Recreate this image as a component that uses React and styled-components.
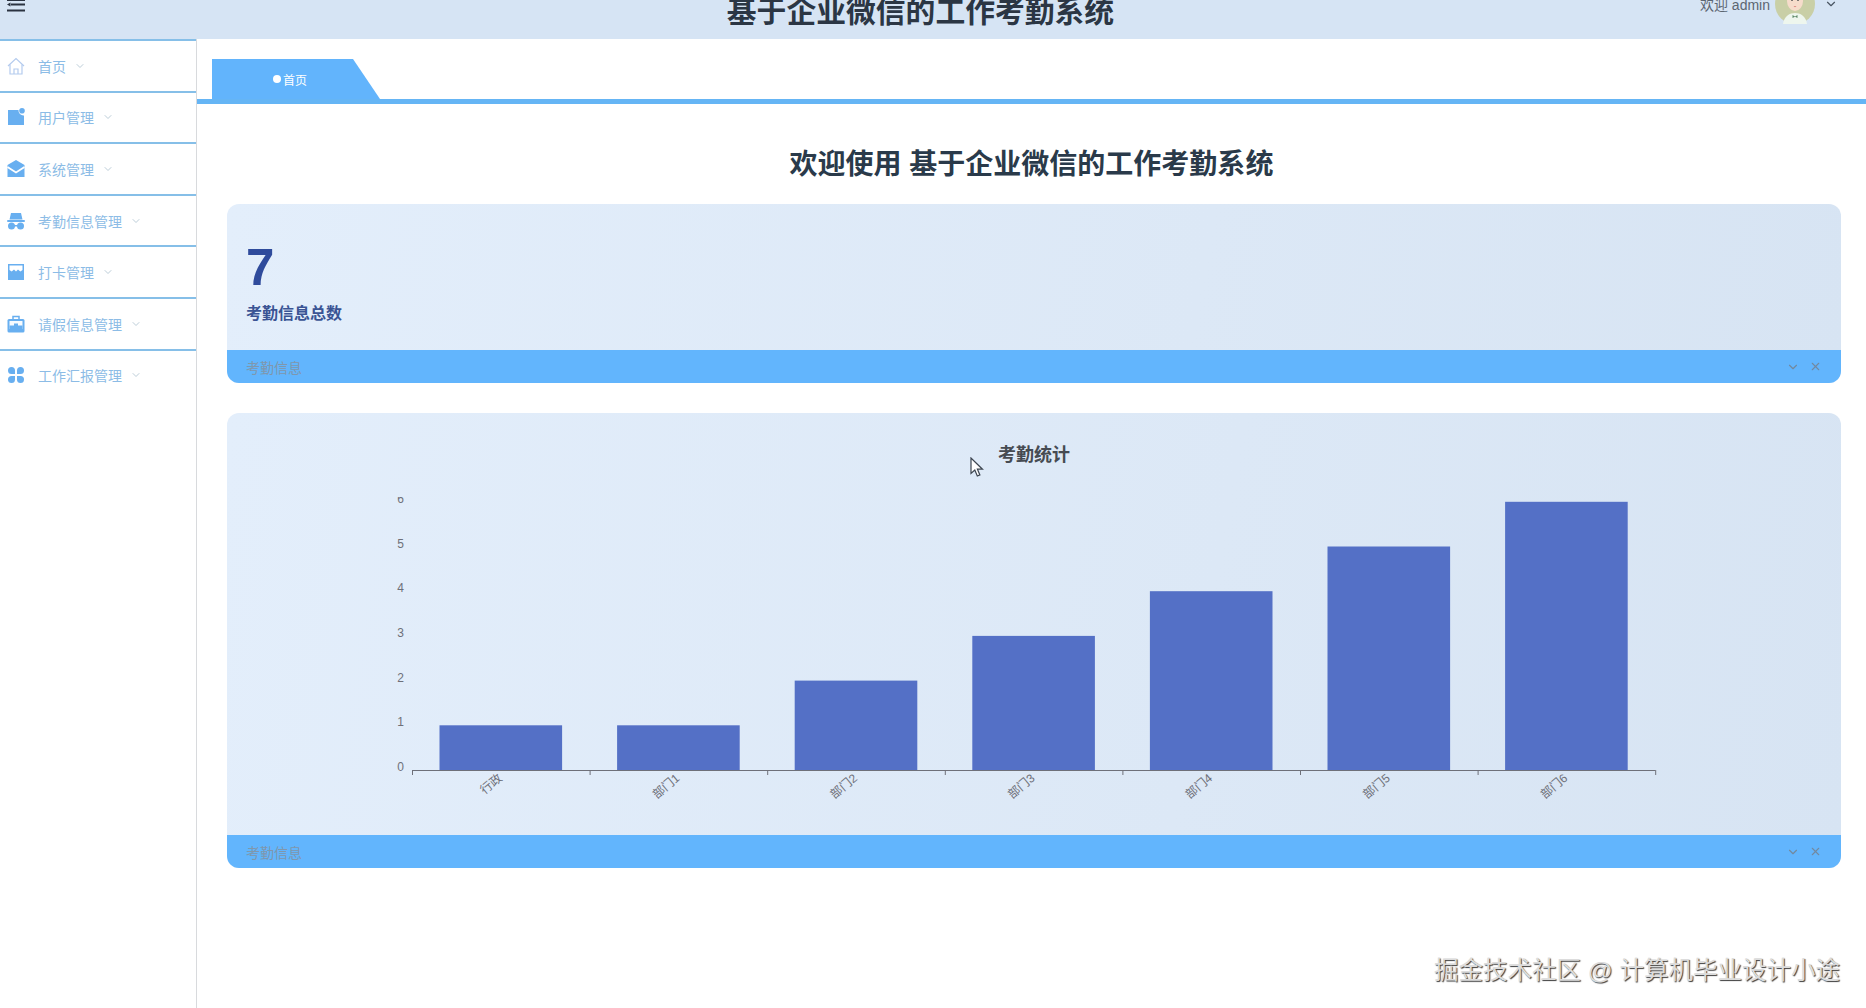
import React from "react";
import styled, { createGlobalStyle } from "styled-components";
import { ChevronDown, X } from "lucide-react";

const GlobalStyle = createGlobalStyle`
  html, body {
    margin: 0;
    height: 100%;
    overflow: hidden;
    background: #fff;
    font-family: "Liberation Sans", "Noto Sans CJK SC", sans-serif;
  }
`;

const Page = styled.div`
  position: relative;
  display: flex;
  flex-direction: column;
  width: 1866px;
  height: 1008px;
  overflow: hidden;
`;

const Header = styled.header`
  height: 39px;
  flex-shrink: 0;
  overflow: hidden;
  background: #d6e4f4;
`;

const HeaderInner = styled.div`
  display: grid;
  grid-template-columns: 1fr auto 1fr;
  align-items: center;
  height: 60px;
  margin-top: -26px;
  padding: 0 28px 0 7px;
  box-sizing: border-box;
`;

const Title = styled.div`
  margin: 16px 0 0 -4px;
  font-size: 29.8px;
  font-weight: 700;
  line-height: 40px;
  color: #2b3644;
  white-space: nowrap;
`;

const UserBox = styled.div`
  display: flex;
  align-items: center;
  justify-content: flex-end;
  gap: 5px;
  font-size: 14px;
  color: #5c6672;
`;

const Avatar = styled.svg`
  width: 40px;
  height: 40px;
  margin-right: 4px;
`;

const Body = styled.div`
  display: flex;
  flex: 1;
  min-height: 0;
`;

const Sidebar = styled.nav`
  width: 197px;
  flex-shrink: 0;
  box-sizing: border-box;
  border-right: 1px solid #d8dadd;
`;

const MenuItem = styled.div`
  display: flex;
  align-items: center;
  height: 51.6px;
  box-sizing: border-box;
  padding-left: 7px;
  border-top: 2px solid #86bfe8;
  color: #8cbce6;
  font-size: 14px;
`;

const MenuIcon = styled.svg`
  width: 18px;
  height: 18px;
  margin-right: 13px;
  flex-shrink: 0;
`;

const MenuArrow = styled(ChevronDown)`
  margin-left: 8px;
  color: #a6bccb;
`;

const Main = styled.main`
  display: flex;
  flex-direction: column;
  flex: 1;
  min-width: 0;
`;

const TabBar = styled.div`
  height: 60px;
  padding-left: 15px;
  padding-top: 20px;
  box-sizing: border-box;
  flex-shrink: 0;
  border-bottom: 5px solid #65b5f5;
  display: flex;
  box-sizing: content-box;
  height: 40px;
`;

const Tab = styled.div`
  display: flex;
  align-items: center;
  gap: 2px;
  width: 168px;
  box-sizing: border-box;
  padding-left: 61px;
  background: #62b4fc;
  clip-path: polygon(0 0, 141px 0, 100% 100%, 0 100%);
  color: #fff;
  font-size: 12px;
`;

const TabDot = styled.span`
  width: 8px;
  height: 8px;
  border-radius: 50%;
  background: #fff;
`;

const Heading = styled.h1`
  margin: 0;
  height: 100px;
  line-height: 122px;
  text-align: center;
  font-size: 28px;
  font-weight: 700;
  color: #2a3a4a;
  padding-right: 0;
`;

const Content = styled.div`
  display: flex;
  flex-direction: column;
  gap: 30px;
  padding: 0 25px 0 30px;
`;

const Card = styled.section`
  display: flex;
  flex-direction: column;
  border-radius: 12px;
  overflow: hidden;
  background: linear-gradient(100deg, #e3eefb 0%, #dce8f6 60%, #d7e4f3 100%);
`;

const StatBody = styled.div`
  height: 146px;
  box-sizing: border-box;
  padding: 38px 0 0 19px;
`;

const StatValue = styled.div`
  font-size: 51px;
  font-weight: 700;
  line-height: 52px;
  color: #2f4b9c;
`;

const StatLabel = styled.div`
  margin-top: 8px;
  font-size: 16px;
  font-weight: 700;
  line-height: 24px;
  color: #3a5494;
`;

const CardFooter = styled.div`
  display: flex;
  align-items: center;
  height: 33px;
  padding: 0 19px;
  background: #62b5fd;
  color: #7f97ad;
  font-size: 14px;
`;

const FooterLabel = styled.span`
  flex: 1;
`;

const FooterTools = styled.div`
  display: flex;
  align-items: center;
  gap: 9px;
  color: #72899f;
`;

const ChartTitle = styled.div`
  height: 84px;
  line-height: 84px;
  text-align: center;
  font-size: 18px;
  font-weight: 700;
  color: #464b52;
`;

const ChartSvg = styled.svg`
  display: block;
  width: 1614px;
  height: 338px;
`;

const Cursor = styled.svg`
  position: absolute;
  left: 970px;
  top: 457px;
  width: 15px;
  height: 21px;
`;

const Watermark = styled.div`
  position: absolute;
  right: 26px;
  bottom: 20px;
  font-size: 24.5px;
  line-height: 34px;
  color: #dcdcdc;
  white-space: nowrap;
  text-shadow: 1px 1px 1px #3c3c3c, -1px -1px 0 #ffffff;
`;

const BLUE = "#68aff0";

const menu = [
  {
    title: "首页",
    icon: (
      <g fill="none" stroke="#b4cbee" strokeWidth="1.2">
        <path d="M1 9 9 1.5 17 9" />
        <path d="M3 7.5V17h12V7.5" />
        <path d="M7 17v-5h4v5" />
      </g>
    ),
  },
  {
    title: "用户管理",
    icon: (
      <g fill={BLUE}>
        <path d="M1 2h10.5a5 5 0 0 0 5.500 5.500V17H1z" />
        <circle cx="15" cy="2.800" r="2.800" />
      </g>
    ),
  },
  {
    title: "系统管理",
    icon: (
      <g>
        <path fill={BLUE} d="M9 0 17.500 5V17H.5V5z" />
        <path fill="none" stroke="#fff" strokeWidth="1.800" d="M.5 7 9 12.500 17.500 7" />
      </g>
    ),
  },
  {
    title: "考勤信息管理",
    icon: (
      <g fill={BLUE}>
        <path d="M4 1h10l1.500 6.500h-13z" />
        <rect x="0" y="8" width="18" height="2" rx="1" />
        <circle cx="4.500" cy="14" r="3.500" />
        <circle cx="13.500" cy="14" r="3.500" />
        <rect x="7" y="13" width="4" height="1.500" />
      </g>
    ),
  },
  {
    title: "打卡管理",
    icon: (
      <g>
        <rect x="1" y="1" width="16" height="16" fill={BLUE} />
        <path fill="#fff" d="M2.500 2.500h13V7l-2.200 1.500L11 6.500 9 8.500 7 6.500 4.700 8.500 2.500 7z" />
      </g>
    ),
  },
  {
    title: "请假信息管理",
    icon: (
      <g>
        <path fill="none" stroke={BLUE} strokeWidth="1.500" d="M6 4V1.500h6V4" />
        <rect x="0.500" y="4" width="17" height="13.500" rx="1.500" fill={BLUE} />
        <path fill="#fff" d="M2.500 6h13v8h-13z" opacity=".95" />
        <path fill={BLUE} d="M2.500 10.500h13V15h-13zM7 8.500h4v3H7z" />
      </g>
    ),
  },
  {
    title: "工作汇报管理",
    icon: (
      <g fill={BLUE}>
        <path d="M4.500 1a3.500 3.500 0 0 1 3.500 3.500V8H4.500a3.500 3.500 0 0 1 0-7z" />
        <path d="M13.500 1a3.500 3.500 0 0 0-3.500 3.500V8h3.500a3.500 3.500 0 0 0 0-7z" />
        <path d="M4.500 17a3.500 3.500 0 0 0 3.500-3.500V10H4.500a3.500 3.500 0 0 0 0 7z" />
        <path d="M13.500 17a3.500 3.500 0 0 1-3.500-3.500V10h3.500a3.500 3.500 0 0 1 0 7z" />
      </g>
    ),
  },
];

const chartData = [
  { name: "行政", value: 1 },
  { name: "部门1", value: 1 },
  { name: "部门2", value: 2 },
  { name: "部门3", value: 3 },
  { name: "部门4", value: 4 },
  { name: "部门5", value: 5 },
  { name: "部门6", value: 6 },
];

const AXIS_X = 185;
const AXIS_Y = 273;
const BAND = 177.6;
const BAR = 122.6;
const UNIT = 44.7;

const AXIS_COLOR = "#6e7079";

function BarChart() {
  return (
    <ChartSvg viewBox="0 0 1614 338">
      {[0, 1, 2, 3, 4, 5, 6].map((n) => (
        <text
          key={n}
          x={177}
          y={AXIS_Y - 2 - n * UNIT}
          fill={AXIS_COLOR}
          fontSize="12"
          textAnchor="end"
          dominantBaseline="middle"
        >
          {n}
        </text>
      ))}
      {chartData.map((d, i) => (
        <rect
          key={d.name}
          x={AXIS_X + i * BAND + (BAND - BAR) / 2}
          y={AXIS_Y - d.value * UNIT}
          width={BAR}
          height={d.value * UNIT}
          fill="#5470c6"
        />
      ))}
      <line x1={AXIS_X} x2={AXIS_X + 7 * BAND} y1={AXIS_Y + 0.5} y2={AXIS_Y + 0.5} stroke={AXIS_COLOR} />
      {chartData.concat({ name: "end" }).map((d, i) => (
        <line
          key={d.name}
          x1={AXIS_X + i * BAND + 0.5}
          x2={AXIS_X + i * BAND + 0.5}
          y1={AXIS_Y}
          y2={AXIS_Y + 5}
          stroke={AXIS_COLOR}
        />
      ))}
      {chartData.map((d, i) => {
        const x = AXIS_X + i * BAND + BAND / 2;
        const y = AXIS_Y + 7;
        return (
          <text
            key={d.name}
            x={x}
            y={y}
            fill={AXIS_COLOR}
            fontSize="12"
            textAnchor="end"
            dominantBaseline="middle"
            transform={`rotate(-40 ${x} ${y})`}
          >
            {d.name}
          </text>
        );
      })}
    </ChartSvg>
  );
}

function Footer() {
  return (
    <CardFooter>
      <FooterLabel>考勤信息</FooterLabel>
      <FooterTools>
        <ChevronDown size={14} />
        <X size={13} />
      </FooterTools>
    </CardFooter>
  );
}

export default function App() {
  return (
    <Page>
      <GlobalStyle />
      <Header>
        <HeaderInner>
          <svg width="18" height="16" viewBox="0 0 18 16" fill="#2a3240">
            <rect x="0" y="3" width="18" height="2" />
            <rect x="4" y="7.500" width="14" height="2" />
            <rect x="0" y="13.500" width="18" height="2" />
            <path d="M0 8.500 3.500 6.500v4z" />
          </svg>
          <Title>基于企业微信的工作考勤系统</Title>
          <UserBox>
            <span>欢迎 admin</span>
            <Avatar viewBox="0 0 40 40">
              <circle cx="20" cy="20" r="20" fill="#c9cfa6" />
              <path d="M8 40c1-8 7-11 12-11s11 3 12 11z" fill="#eef6ee" />
              <ellipse cx="20" cy="17" rx="8" ry="10" fill="#f6dccb" />
              <path d="M10 14c0-9 5-12 10-12s10 3 10 12c-4-1-7-3-9-6-2 3-6 5-11 6z" fill="#9a8f63" />
              <circle cx="17" cy="16" r="1" fill="#555" />
              <circle cx="23" cy="16" r="1" fill="#555" />
              <path d="M18.500 22h3l-1.500 1.200z" fill="#d9827c" />
              <path d="M17.500 31l2.500 1.500 2.500-1.500v3l-2.500-1.200-2.500 1.200z" fill="#5f8a6a" />
            </Avatar>
            <ChevronDown size={14} color="#4a5562" />
          </UserBox>
        </HeaderInner>
      </Header>
      <Body>
        <Sidebar>
          {menu.map((item) => (
            <MenuItem key={item.title}>
              <MenuIcon viewBox="0 0 18 18">{item.icon}</MenuIcon>
              {item.title}
              <MenuArrow size={12} strokeWidth={1.5} />
            </MenuItem>
          ))}
        </Sidebar>
        <Main>
          <TabBar>
            <Tab>
              <TabDot />
              首页
            </Tab>
          </TabBar>
          <Heading>欢迎使用 基于企业微信的工作考勤系统</Heading>
          <Content>
            <Card>
              <StatBody>
                <StatValue>7</StatValue>
                <StatLabel>考勤信息总数</StatLabel>
              </StatBody>
              <Footer />
            </Card>
            <Card>
              <ChartTitle>考勤统计</ChartTitle>
              <BarChart />
              <Footer />
            </Card>
          </Content>
        </Main>
      </Body>
      <Cursor viewBox="0 0 15 21">
        <path d="M1 1v15.500l3.800-3.400 2.500 5.900 2.600-1.100-2.500-5.700h5.100z" fill="#fff" stroke="#3d4550" strokeWidth="1.200" />
      </Cursor>
      <Watermark>掘金技术社区 @ 计算机毕业设计小途</Watermark>
    </Page>
  );
}
